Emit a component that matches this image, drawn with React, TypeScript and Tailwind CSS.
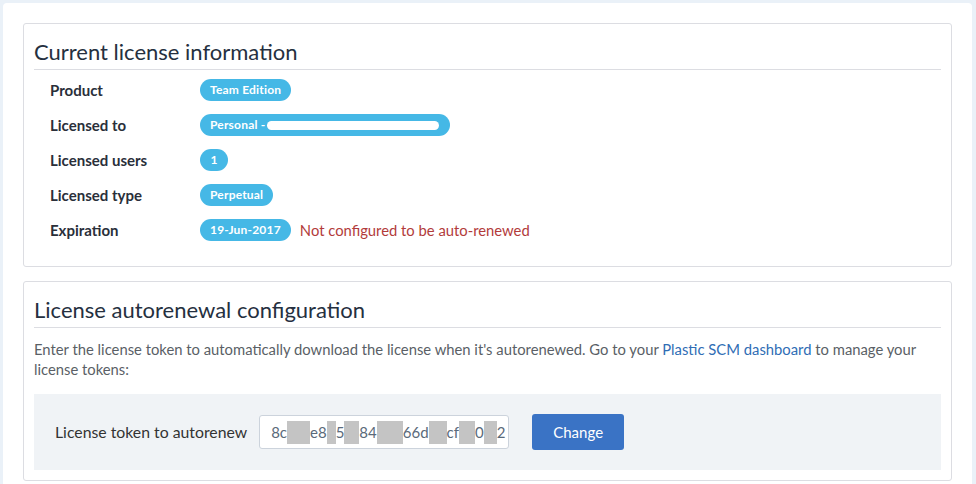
import React from "react";

const rows = [
  { label: "Product", value: "Team Edition" },
  { label: "Licensed to", value: "personal" },
  { label: "Licensed users", value: "1" },
  { label: "Licensed type", value: "Perpetual" },
  { label: "Expiration", value: "19-Jun-2017" },
];

const Badge = ({ children, className = "" }: { children: React.ReactNode; className?: string }) => (
  <span
    className={`inline-flex items-center h-[22px] px-[10px] rounded-full bg-[#45b8e6] text-white text-[12px] font-bold tracking-[0.2px] ${className}`}
  >
    {children}
  </span>
);

// gray blocks hiding parts of the token
const Blur = ({ w }: { w: number }) => (
  <span className="inline-block h-[23px] bg-[#c4c4c4] align-middle" style={{ width: w }} />
);

export default function App() {
  return (
    <div className="min-h-[484px] bg-[#eaf1f8] pl-[3px] pt-[3px] pr-[4px] font-['Lato','Noto_Sans',sans-serif] text-[#333]">
      <div className="bg-white rounded-[4px] px-[20px] pt-[20px] pb-[20px] flex flex-col gap-[14px]">
        {/* current license */}
        <div className="border border-[#dcdde2] rounded-[3px] px-[10px] pt-[12px] pb-[25px]">
          <h2 className="text-[22px] leading-[32px] text-[#253040] pb-[1px] border-b border-[#dcdde2]">
            Current license information
          </h2>
          <div className="flex flex-col gap-[13px] pt-[9px] pl-[16px]">
            {rows.map((r) => (
              <div key={r.label} className="flex items-center h-[22px]">
                <div className="w-[150px] text-[15px] font-bold text-[#2a2f3a]">{r.label}</div>
                {r.value === "personal" ? (
                  <Badge className="w-[250px]">
                    Personal -
                    <span className="ml-[2px] inline-block w-[172px] h-[9px] bg-white rounded-full" />
                  </Badge>
                ) : r.value === "1" ? (
                  <Badge className="px-[0px] w-[28px] justify-center">1</Badge>
                ) : (
                  <Badge>{r.value}</Badge>
                )}
                {r.label === "Expiration" && (
                  <span className="ml-[9px] text-[14.8px] text-[#b23b3b]">Not configured to be auto-renewed</span>
                )}
              </div>
            ))}
          </div>
        </div>

        {/* autorenewal */}
        <div className="border border-[#dcdde2] rounded-[3px] px-[10px] pt-[12px] pb-[10px]">
          <h2 className="text-[22px] leading-[32px] text-[#253040] pb-[1px] border-b border-[#dcdde2]">
            License autorenewal configuration
          </h2>
          <p className="mt-[11px] text-[14.8px] leading-[20px] text-[#5a5f66]">
            Enter the license token to automatically download the license when it's autorenewed. Go to your{" "}
            <a className="text-[#2f6db5]">Plastic SCM dashboard</a> to manage your license tokens:
          </p>
          <div className="mt-[15px] bg-[#f0f3f6] h-[76px] flex items-center pl-[21px]">
            <span className="text-[15.8px] text-[#333]">License token to autorenew</span>
            <div className="ml-[12px] w-[250px] h-[34px] bg-white border border-[#ccd3dc] rounded-[3px] flex items-center pl-[11px] text-[15px] text-[#5a6a7a] whitespace-nowrap">
              8c<Blur w={23} />e8<Blur w={9} />5<Blur w={15} />84<Blur w={26} />66d<Blur w={18} />cf<Blur w={16} />0<Blur w={13} />2
            </div>
            <button className="ml-[23px] w-[92px] h-[36px] bg-[#3a73c5] rounded-[3px] text-white text-[15px]">
              Change
            </button>
          </div>
        </div>
      </div>
    </div>
  );
}
